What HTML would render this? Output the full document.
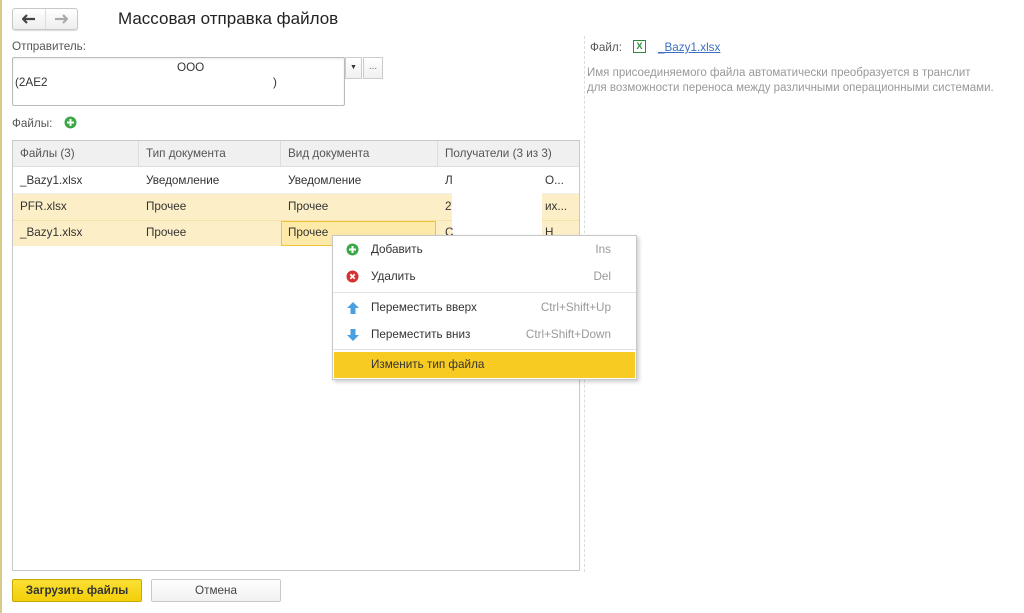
<!DOCTYPE html>
<html><head><meta charset="utf-8"><style>
*{box-sizing:border-box;margin:0;padding:0}
body{width:1024px;height:613px;background:#fff;font-family:"Liberation Sans",Arial,sans-serif;font-size:11.7px;color:#333;position:relative;overflow:hidden}
.a{position:absolute}
.cell{position:absolute;padding-left:8px;line-height:26px;white-space:nowrap}
.mi{position:absolute;left:0;width:304px;height:26px;line-height:26px}
.mi .t{position:absolute;left:38px}
.mi .k{position:absolute;right:26px;color:#999}
</style></head><body>
<div class="a" style="left:0;top:0;width:2px;height:613px;background:#d8c98a"></div>
<div class="a" style="left:12px;top:8px;width:66px;height:22px;border:1px solid #c8c8c8;border-radius:3px;background:linear-gradient(#fff,#eee);box-shadow:0 1px 1px rgba(0,0,0,.15)"></div>
<div class="a" style="left:45px;top:9px;width:1px;height:20px;background:#ddd"></div>
<svg class="a" style="left:22px;top:14px" width="14" height="10"><path d="M1 5h12M5 1L1 5l4 4" stroke="#444" stroke-width="2.2" fill="none"/></svg>
<svg class="a" style="left:54px;top:14px" width="14" height="10"><path d="M1 5h12M9 1l4 4-4 4" stroke="#aaa" stroke-width="2.2" fill="none"/></svg>
<div class="a" style="left:118px;top:9px;font-size:17px;color:#222">Массовая отправка файлов</div>
<div class="a" style="left:12px;top:40px;color:#555">Отправитель:</div>
<div class="a" style="left:12px;top:57px;width:333px;height:49px;border:1px solid #bbb;border-radius:2px;box-shadow:inset 0 1px 2px rgba(0,0,0,.08)"></div>
<div class="a" style="left:177px;top:61px">ООО</div>
<div class="a" style="left:15px;top:76px">(2АЕ2</div>
<div class="a" style="left:273px;top:76px">)</div>
<div class="a" style="left:345px;top:57px;width:17px;height:22px;border:1px solid #ccc;background:linear-gradient(#fff,#f0f0f0);font-size:7px;text-align:center;line-height:20px">&#9660;</div>
<div class="a" style="left:363px;top:57px;width:20px;height:22px;border:1px solid #ccc;background:linear-gradient(#fff,#f0f0f0);text-align:center;line-height:18px;font-size:10px;color:#666">...</div>
<div class="a" style="left:12px;top:117px;color:#555">Файлы:</div>
<svg class="a" style="left:64px;top:116px" width="13" height="13"><circle cx="6.5" cy="6.5" r="6" fill="#3aa845"/><path d="M6.5 3v7M3 6.5h7" stroke="#fff" stroke-width="2"/></svg>
<div class="a" style="left:12px;top:140px;width:568px;height:431px;border:1px solid #c8c8c8"></div>
<div class="a" style="left:13px;top:141px;width:566px;height:26px;background:#f0f0f0;border-bottom:1px solid #ddd"></div>
<div class="a" style="left:138px;top:141px;width:1px;height:26px;background:#ddd"></div>
<div class="a" style="left:280px;top:141px;width:1px;height:26px;background:#ddd"></div>
<div class="a" style="left:437px;top:141px;width:1px;height:26px;background:#ddd"></div>
<div class="cell" style="left:12px;top:141px;color:#555">Файлы (3)</div>
<div class="cell" style="left:138px;top:141px;color:#555">Тип документа</div>
<div class="cell" style="left:280px;top:141px;color:#555">Вид документа</div>
<div class="cell" style="left:437px;top:141px;color:#555">Получатели (3 из 3)</div>
<div class="a" style="left:13px;top:193px;width:566px;height:1px;background:#eee"></div>
<div class="cell" style="left:12px;top:168px">_Bazy1.xlsx</div>
<div class="cell" style="left:138px;top:168px">Уведомление</div>
<div class="cell" style="left:280px;top:168px">Уведомление</div>
<div class="a" style="left:13px;top:194px;width:566px;height:52px;background:#fcefc7"></div>
<div class="a" style="left:13px;top:220px;width:566px;height:1px;background:#f5e2a8"></div>
<div class="a" style="left:281px;top:221px;width:155px;height:25px;border:1px solid #efc23b;background:#fde9a8"></div>
<div class="cell" style="left:12px;top:194px">PFR.xlsx</div>
<div class="cell" style="left:138px;top:194px">Прочее</div>
<div class="cell" style="left:280px;top:194px">Прочее</div>
<div class="cell" style="left:12px;top:220px">_Bazy1.xlsx</div>
<div class="cell" style="left:138px;top:220px">Прочее</div>
<div class="cell" style="left:280px;top:220px">Прочее</div>
<div class="a" style="left:452px;top:167px;width:90px;height:79px;background:#fff"></div>
<div class="cell" style="left:437px;top:168px">Л</div><div class="cell" style="left:537px;top:168px">О...</div>
<div class="cell" style="left:437px;top:194px">2</div><div class="cell" style="left:537px;top:194px">их...</div>
<div class="cell" style="left:437px;top:220px">С</div><div class="cell" style="left:537px;top:220px">Н</div>
<div class="a" style="left:584px;top:36px;height:536px;border-left:1px dashed #ddd"></div>
<div class="a" style="left:590px;top:41px;color:#555">Файл:</div>
<div class="a" style="left:633px;top:40px;width:13px;height:13px;border:1.5px solid #2e8b3c;color:#2e8b3c;font-weight:bold;font-size:9px;text-align:center;line-height:10px">X</div>
<div class="a" style="left:658px;top:41px;color:#3b6fc4;text-decoration:underline">_Bazy1.xlsx</div>
<div class="a" style="left:587px;top:66px;color:#999;line-height:15px;font-size:11.5px">Имя присоединяемого файла автоматически преобразуется в транслит<br>для возможности переноса между различными операционными системами.</div>
<div class="a" style="left:332px;top:235px;width:305px;height:145px;border:1px solid #c8c8c8;background:#fff;box-shadow:2px 2px 4px rgba(0,0,0,.2)">
<div class="mi" style="top:1px"><svg class="a" style="left:13px;top:6px" width="13" height="13"><circle cx="6.5" cy="6.5" r="6" fill="#3aa845"/><path d="M6.5 3v7M3 6.5h7" stroke="#fff" stroke-width="2"/></svg><span class="t">Добавить</span><span class="k">Ins</span></div>
<div class="mi" style="top:28px"><svg class="a" style="left:13px;top:6px" width="13" height="13"><circle cx="6.5" cy="6.5" r="6" fill="#d63030"/><path d="M4.3 4.3l4.4 4.4M8.7 4.3l-4.4 4.4" stroke="#fff" stroke-width="1.8"/></svg><span class="t">Удалить</span><span class="k">Del</span></div>
<div class="a" style="left:0;top:56px;width:303px;height:1px;background:#e2e2e2"></div>
<div class="mi" style="top:59px"><svg class="a" style="left:14px;top:7px" width="12" height="12"><path d="M6 0L12 6H8.5V12H3.5V6H0Z" fill="#4a9fe0"/></svg><span class="t">Переместить вверх</span><span class="k">Ctrl+Shift+Up</span></div>
<div class="mi" style="top:86px"><svg class="a" style="left:14px;top:7px" width="12" height="12"><path d="M6 12L12 6H8.5V0H3.5V6H0Z" fill="#4a9fe0"/></svg><span class="t">Переместить вниз</span><span class="k">Ctrl+Shift+Down</span></div>
<div class="a" style="left:0;top:113px;width:303px;height:1px;background:#e2e2e2"></div>
<div class="mi" style="top:116px;left:1px;width:301px;height:26px;background:#f8cb22"><span class="t" style="left:37px">Изменить тип файла</span></div>
</div>
<div class="a" style="left:12px;top:579px;width:130px;height:23px;border:1px solid #c9a800;border-radius:2px;background:linear-gradient(#fbe035,#f3cf07);text-align:center;line-height:21px;font-weight:bold;color:#333">Загрузить файлы</div>
<div class="a" style="left:151px;top:579px;width:130px;height:23px;border:1px solid #c8c8c8;border-radius:2px;background:linear-gradient(#fff,#f1f1f1);text-align:center;line-height:21px;color:#444">Отмена</div>
</body></html>
